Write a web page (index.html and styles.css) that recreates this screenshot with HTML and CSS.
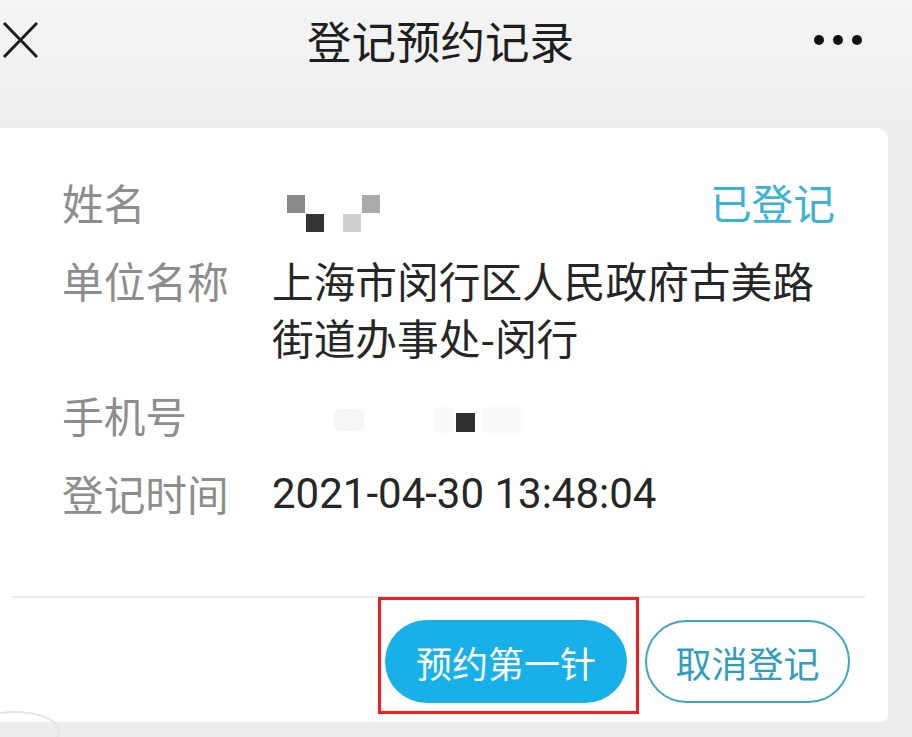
FILE: index.html
```html
<!DOCTYPE html>
<html lang="zh-CN">
<head>
<meta charset="utf-8">
<title>登记预约记录</title>
<link rel="stylesheet" href="styles.css">
</head>
<body>
<div class="screen">
  <header class="nav">
    <svg class="close" width="36" height="36" viewBox="0 0 36 36"><path d="M2 1 L35 35 M35 1 L2 35" stroke="#1f1f1f" stroke-width="3" fill="none"/></svg>
    <h1 class="title">登记预约记录</h1>
    <div class="more"><span></span><span></span><span></span></div>
  </header>
  <main class="main">
    <section class="card">
      <div class="info">
        <div class="row">
          <div class="label">姓名</div>
          <div class="value masked">
            <span class="px p1"></span><span class="px p2"></span><span class="px p3"></span><span class="px p4"></span>
          </div>
          <div class="status">已登记</div>
        </div>
        <div class="row">
          <div class="label">单位名称</div>
          <div class="value">上海市闵行区人民政府古美路街道办事处-闵行</div>
        </div>
        <div class="row">
          <div class="label">手机号</div>
          <div class="value masked">
            <span class="blur b1"></span><span class="blur b2"></span><span class="px p5"></span><span class="blur b3"></span>
          </div>
        </div>
        <div class="row">
          <div class="label">登记时间</div>
          <div class="value num">2021-04-30 13:48:04</div>
        </div>
      </div>
      <div class="divider"></div>
      <div class="actions">
        <button class="btn primary">预约第一针</button>
        <button class="btn outline">取消登记</button>
      </div>
      <div class="highlight"></div>
      <div class="corner-arc"></div>
    </section>
  </main>
</div>
</body>
</html>
```

FILE: styles.css
```css
* { box-sizing: border-box; }
html, body { margin: 0; padding: 0; }
body {
  width: 912px;
  height: 737px;
  overflow: hidden;
  background: #eeeeee;
  font-family: "Noto Sans CJK SC", "Noto Sans", sans-serif;
}
.screen { width: 912px; height: 737px; display: flex; flex-direction: column; }
.nav {
  height: 90px;
  display: flex;
  align-items: center;
  padding: 0 50px 0 2px;
  background: linear-gradient(#f4f4f4, #f0f0f0);
}
.close { display: block; margin-top: -10px; }
.title {
  margin: -10px 0 0 269px;
  font-size: 44.5px;
  font-weight: 400;
  color: #1e1e1e;
  line-height: 1;
}
.more { margin-left: auto; display: flex; gap: 9px; margin-top: -10px; }
.more span { width: 10px; height: 10px; border-radius: 50%; background: #111; }

.main { padding: 38px 24px 0 0; background: linear-gradient(#efefef, #ededed 40px); flex: 1; }
.card {
  position: relative;
  background: #fff;
  border-radius: 0 12px 8px 0;
  height: 594px;
}
.info { padding: 46px 53px 0 62px; display: flex; flex-direction: column; gap: 21px; height: 468px; }
.row { display: flex; align-items: flex-start; font-size: 41.7px; line-height: 57px; }
.label { width: 210px; flex: none; color: #8d8d8d; }
.value { flex: 1; color: #262626; }
.status { color: #3bb2d6; }
.num { font-family: Roboto, "Noto Sans CJK SC", sans-serif; font-size: 42px; }
.masked { position: relative; height: 57px; }
.px { position: absolute; width: 18px; height: 18px; }
.p1 { left: 15px; top: 21px; background: #8a8a8a; }
.p2 { left: 34px; top: 40px; background: #333; }
.p3 { left: 71px; top: 40px; background: #cfcfcf; }
.p4 { left: 90px; top: 21px; background: #ababab; }
.p5 { left: 184px; top: 26px; width: 19px; height: 19px; background: #2f2f2f; }
.blur { position: absolute; background: #fafafa; border-radius: 6px; }
.b1 { left: 62px; top: 22px; width: 30px; height: 22px; background: #f6f6f6; }
.b2 { left: 162px; top: 20px; width: 20px; height: 26px; }
.b3 { left: 210px; top: 20px; width: 42px; height: 26px; }

.divider { margin: 0 23px 0 12px; height: 2px; background: #eaeaea; }
.actions { display: flex; justify-content: flex-end; gap: 18px; padding: 22px 38px 0 0; }
.btn {
  height: 83px;
  border-radius: 42px;
  font-family: "Noto Sans CJK SC", sans-serif;
  font-size: 36px;
  line-height: 1;
  padding: 0;
}
.primary { width: 242px; background: #18b0e8; color: #fff; border: none; }
.outline { width: 205px; background: #fff; color: #2f9dbf; border: 2.5px solid #3ba5c2; }
.highlight {
  position: absolute;
  left: 378px;
  top: 469px;
  width: 261px;
  height: 117px;
  border: 3px solid #f41d1d;
}
.corner-arc {
  position: absolute;
  left: -30px;
  top: 583px;
  width: 90px;
  height: 40px;
  border-radius: 50%;
  border: 2px solid #e4e4e4;
  border-bottom: none;
  border-left: none;
}
```
